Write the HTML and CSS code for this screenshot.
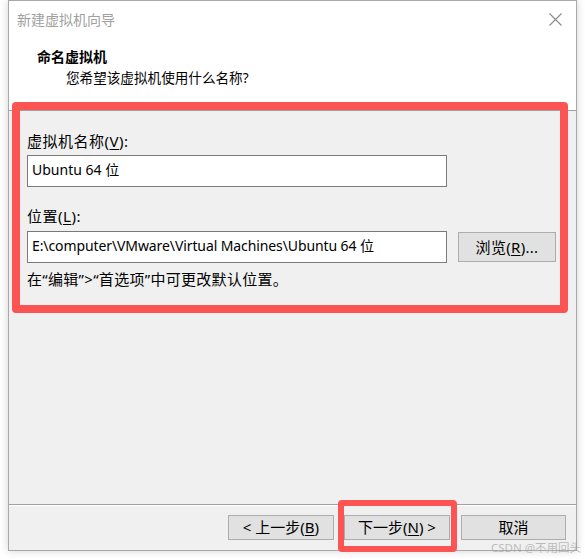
FILE: index.html
```html
<!DOCTYPE html>
<html lang="zh-CN">
<head>
<meta charset="utf-8">
<title>新建虚拟机向导</title>
<link rel="stylesheet" href="styles.css">
</head>
<body>
<div class="window">
  <div class="header">
    <div class="titlebar">
      <span class="title">新建虚拟机向导</span>
      <svg class="close" width="13" height="13" viewBox="0 0 13 13"><path d="M0.5 0.5 L12.5 12.5 M12.5 0.5 L0.5 12.5" stroke="#8a8a8a" stroke-width="1.1" fill="none"/></svg>
    </div>
    <div class="heading">命名虚拟机</div>
    <div class="subheading">您希望该虚拟机使用什么名称?</div>
  </div>
  <div class="content">
    <div class="label">虚拟机名称(<u>V</u>):</div>
    <div class="row">
      <div class="input">Ubuntu 64 位</div>
    </div>
    <div class="label second">位置(<u>L</u>):</div>
    <div class="row">
      <div class="input path">E:\computer\VMware\Virtual Machines\Ubuntu 64 位</div>
      <div class="btn browse">浏览(<u>R</u>)...</div>
    </div>
    <div class="hint">在“编辑”&gt;“首选项”中可更改默认位置。</div>
    <div class="mark mark-form"></div>
  </div>
  <div class="footer">
    <div class="btn">&lt; 上一步(<u>B</u>)</div>
    <div class="btn next">下一步(<u>N</u>) &gt;<div class="mark mark-next"></div></div>
    <div class="btn cancel">取消</div>
  </div>
</div>
<div class="watermark">CSDN @不用回头</div>
</body>
</html>
```
FILE: styles.css
```css
html, body {
  margin: 0;
  padding: 0;
  background: #ffffff;
}
body {
  width: 585px;
  height: 559px;
  position: relative;
  overflow: hidden;
  font-family: "Noto Sans", "Noto Sans CJK SC", sans-serif;
  font-size: 14px;
  color: #000;
}
.window {
  margin-left: 8px;
  width: 567px;
  height: 549px;
  border: 1px solid #a9a9a9;
  background: #f0f0f0;
  box-shadow: 0 0 8px rgba(0,0,0,0.18);
  display: flex;
  flex-direction: column;
}
.header {
  background: #ffffff;
  height: 109px;
  border-bottom: 1px solid #a0a0a0;
  flex: none;
}
.titlebar {
  display: flex;
  justify-content: space-between;
  align-items: center;
  height: 37px;
  padding: 0 14px 0 8px;
}
.title {
  color: #a0a0a0;
  font-size: 14px;
  line-height: 18px;
}
.close {
  display: block;
}
.heading {
  margin-left: 28px;
  margin-top: 9px;
  font-weight: bold;
  line-height: 20px;
  font-size: 14px;
}
.subheading {
  margin-left: 57px;
  margin-top: 1px;
  line-height: 20px;
  font-size: 13.6px;
}
.content {
  flex: 1;
  position: relative;
  padding: 21px 0 0 18px;
}
.label {
  line-height: 18px;
  height: 18px;
  font-size: 15px;
  letter-spacing: 0.5px;
}
.label.second {
  margin-top: 20px;
}
.row {
  display: flex;
  align-items: center;
  margin-top: 5px;
  gap: 11px;
}
.label.second + .row {
  margin-top: 6px;
}
.input {
  box-sizing: border-box;
  width: 420px;
  height: 32px;
  border: 1px solid #7a7a7a;
  background: #ffffff;
  padding: 0 4px;
  line-height: 28px;
  white-space: nowrap;
  overflow: hidden;
}
.input.path {
  letter-spacing: -0.1px;
}
.btn {
  box-sizing: border-box;
  width: 106px;
  height: 25px;
  border: 1px solid #adadad;
  background: #e1e1e1;
  text-align: center;
  line-height: 23px;
  font-size: 15px;
  position: relative;
}
.btn.browse {
  width: 98px;
  height: 30px;
  line-height: 28px;
  letter-spacing: 0.3px;
}
.hint {
  margin-top: 7px;
  line-height: 18px;
  font-size: 15px;
  letter-spacing: 0.3px;
}
.footer {
  flex: none;
  height: 46px;
  border-top: 1px solid #a0a0a0;
  box-shadow: inset 0 1px 0 #ffffff;
  display: flex;
  justify-content: flex-end;
  align-items: flex-start;
  gap: 10px;
  padding: 10px 10px 0 0;
  box-sizing: border-box;
}
.btn.cancel {
  width: 105px;
  margin-left: 1px;
}
u {
  text-decoration-thickness: 1px;
  text-underline-offset: 2px;
}
.mark {
  position: absolute;
  border: 8px solid #fc5353;
  border-radius: 4px;
  box-sizing: border-box;
  pointer-events: none;
  letter-spacing: 0;
}
.mark-form {
  left: 3px;
  top: -9px;
  width: 556px;
  height: 211px;
}
.mark-next {
  border-width: 6px;
  left: -7px;
  top: -16px;
  width: 119px;
  height: 52px;
}
.watermark {
  position: absolute;
  right: 4px;
  top: 540px;
  font-size: 11.5px;
  line-height: 16px;
  color: rgba(150,150,150,0.6);
}
```
